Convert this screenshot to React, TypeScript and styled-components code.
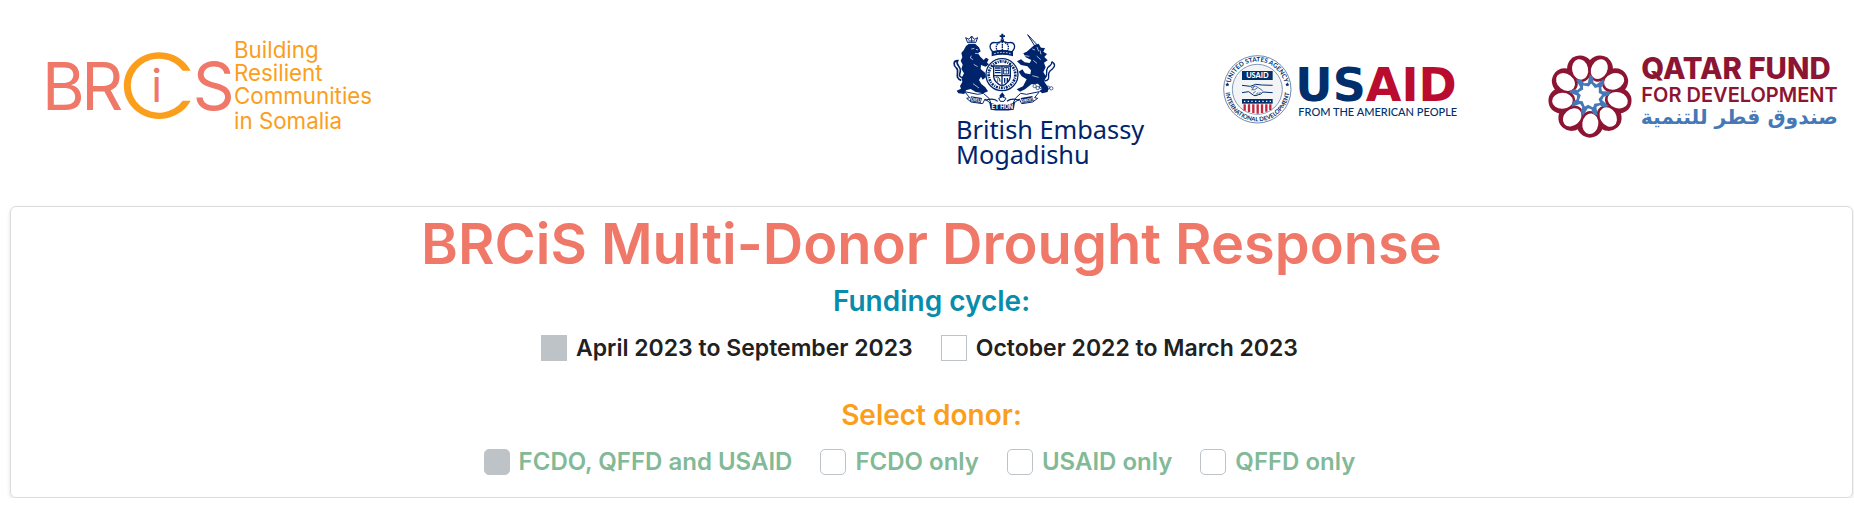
import React, { useState } from "react";
import styled, { createGlobalStyle } from "styled-components";

const GlobalStyle = createGlobalStyle`
  *, *::before, *::after { box-sizing: border-box; }
  body {
    margin: 0;
    background: #fff;
    font-family: Inter, "Liberation Sans", sans-serif;
  }
`;

const CORAL = "#ef7869";
const ORANGE = "#fb9e1c";
const NAVY = "#00246b";
const MAROON = "#8c1533";
const BLUE = "#4478b6";

const Header = styled.header`
  display: flex;
  align-items: center;
  justify-content: space-between;
  padding: 28px 14px 34px 42px;
`;

const Partners = styled.div`
  display: flex;
  align-items: center;
  gap: 68px;
`;

const Logo = styled.svg`
  display: block;
  flex: none;
  height: 144px;
`;

const Panel = styled.main`
  display: flex;
  flex-direction: column;
  align-items: center;
  margin: 0 1px 0 10px;
  padding: 7px 16px 22px;
  border: 1px solid #dadcdc;
  border-radius: 6px;
  box-shadow: 0 2px 4px rgba(0, 0, 0, 0.12);
`;

const Title = styled.h1`
  margin: 0 0 5px;
  color: ${CORAL};
  font-size: 56px;
  font-weight: 600;
  line-height: 60px;
  text-align: center;
`;

const Group = styled.fieldset`
  display: flex;
  flex-direction: column;
  align-items: center;
  margin: 0;
  padding: 0;
  border: 0;

  & + & {
    margin-top: 32px;
  }
`;

const GroupTitle = styled.legend<{ $color: string }>`
  padding: 0;
  margin: 0 auto 12px;
  color: ${(p) => p.$color};
  font-size: 28px;
  font-weight: 600;
  line-height: 44px;
`;

const Options = styled.div`
  display: flex;
  flex-wrap: wrap;
  justify-content: center;
  gap: 8px 28px;
  padding-right: 24px;
`;

const Option = styled.label<{ $color: string; $size: number }>`
  display: flex;
  align-items: center;
  gap: 9px;
  color: ${(p) => p.$color};
  font-size: ${(p) => p.$size}px;
  font-weight: 600;
  line-height: 26px;
  cursor: pointer;
`;

const Box = styled.input<{ $radius: number }>`
  appearance: none;
  flex: none;
  width: 26px;
  height: 26px;
  margin: 0;
  border: 1px solid #bdc3c7;
  border-radius: ${(p) => p.$radius}px;
  background: #fff;
  cursor: pointer;

  &:checked {
    background: #bdc3c7;
  }
`;

function BrcisLogo() {
  return (
    <Logo width="332" viewBox="36 -6 996 432" role="img" aria-label="BRCiS">
      <g fill={CORAL} fontFamily="Inter, sans-serif" fontSize="196" fontWeight="400">
        <text x="36" y="239">B</text>
        <text x="154" y="239">R</text>
        <text x="488" y="239">S</text>
        <text x="364" y="216" fontSize="134">i</text>
      </g>
      <path
        d="M482 122H458A85 81 0 1 0 458 212H482A106 100 0 1 1 482 122Z"
        fill={ORANGE}
      />
      <g fill={ORANGE} fontFamily="Inter, sans-serif" fontSize="67">
        <text x="612" y="84">Building</text>
        <text x="612" y="153">Resilient</text>
        <text x="612" y="222">Communities</text>
        <text x="612" y="296">in Somalia</text>
      </g>
    </Logo>
  );
}

function EmbassyLogo() {
  return (
    <Logo width="204" viewBox="30 9 612 432" role="img" aria-label="British Embassy Mogadishu">
      <g transform="translate(25 15)" fill={NAVY} stroke="none">
        {/* royal crown */}
        <path d="M159 11h6v5h5v5h-5v6h-6v-6h-5v-5h5zM157 28h10v6h-10z" />
        <g fill="#fff" stroke={NAVY} strokeWidth="4">
          <path d="M134 66C118 50 126 35 142 38C151 40 156 35 162 34C168 35 173 40 182 38C198 35 206 50 190 66Z" />
          <path d="M149 65C139 52 145 41 153 39M175 65C185 52 179 41 171 39M162 35V64" strokeDasharray="5 2" />
          <path d="M132 66Q162 57 192 66V76Q162 68 132 76Z" fill={NAVY} />
        </g>
        <path d="M138 71Q162 63 187 71" fill="none" stroke="#fff" strokeWidth="3" strokeDasharray="4 5" />
        {/* lion */}
        <path d="M53 48L61 42H81L92 52L97 64L89 70L96 80L106 90L113 83L121 88L116 98L122 103L112 110L98 105L97 117L110 128L113 141L103 149L98 140L92 150L99 162L111 172L119 184L105 190L82 186L67 177L53 181L48 192L30 190L25 182L38 176L35 168L42 156L40 144L47 130L39 117L43 104L37 92L42 82L39 69L46 61Z" />
        <path d="M58 38L52 23L62 28L70 18L78 28L88 23L82 38Z" fill="#fff" stroke={NAVY} strokeWidth="3" />
        <path d="M70 19v18M60 33h20" stroke={NAVY} strokeWidth="3" />
        <path d="M39 151C15 144 36 123 24 114C15 106 14 92 28 92C20 105 37 107 36 122C36 132 27 140 43 143" fill="none" stroke={NAVY} strokeWidth="5" />
        <path d="M69 57l9-2M83 58l6 2M80 70l9 1M69 77l-3 7 8 5M76 103l12 7M74 161l18 13" fill="none" stroke="#fff" strokeWidth="2" />
        {/* unicorn */}
        <path d="M238 14L265 43L260 49Z" fill="#fff" stroke={NAVY} strokeWidth="3" />
        <path d="M258 45L271 41L278 53L290 54L285 65L296 72L288 81L298 91L287 98L292 112L285 126L294 141L287 154L301 174L298 186L282 190L273 183L282 176L269 161L249 163L230 178L215 185L205 178L224 169L235 148L220 139L211 125L222 118L230 130L246 133L248 121L237 109L218 105L206 94L218 88L229 97L244 99L249 90L232 82L225 70L235 65L247 55Z" />
        <path d="M252 57l8 3M266 51l5 13M275 61l3 12M265 78l12 11M255 91l11 9M252 137l19 5M229 77l14 2" fill="none" stroke="#fff" strokeWidth="2" />
        <path d="M288 153C312 150 293 134 305 123C320 112 324 103 310 95M289 142C302 138 289 126 298 113C306 104 312 107 310 95" fill="none" stroke={NAVY} strokeWidth="4" />
        <g fill="none" stroke={NAVY} strokeWidth="2">
          <circle cx="259" cy="168" r="5" />
          <circle cx="268" cy="174" r="5" />
          <circle cx="278" cy="171" r="5" />
          <circle cx="290" cy="177" r="5" />
          <circle cx="299" cy="173" r="5" />
          <circle cx="309" cy="175" r="5" />
        </g>
        {/* garter and quartered shield */}
        <circle cx="161" cy="134" r="48" fill="#fff" stroke={NAVY} strokeWidth="4" />
        <circle cx="161" cy="134" r="40" fill="none" stroke={NAVY} strokeWidth="8" strokeDasharray="6 3 3 3" />
        <path d="M136 108H186V140Q184 158 161 168Q138 158 136 140Z" fill="#fff" stroke={NAVY} strokeWidth="4" />
        <path d="M161 108V167M136 137H186M140 114h17M140 121h17M140 128h17M169 144v14M177 144v12" stroke={NAVY} strokeWidth="4" fill="none" />
        <path d="M166 113h15v19h-15zM142 142q12-5 13 13" fill="none" stroke={NAVY} strokeWidth="3" />
        <path d="M174 114v17M167 122h14M148 145v12" stroke={NAVY} strokeWidth="2" />
        {/* motto ribbon */}
        <path d="M49 185L88 193L105 190L122 205L128 221L110 207L103 221L68 216L55 205L64 203Z" fill="#fff" stroke={NAVY} strokeWidth="3" />
        <path d="M273 185L234 193L217 190L201 205L194 221L213 207L220 221L253 216L268 205L259 203Z" fill="#fff" stroke={NAVY} strokeWidth="3" />
        <path d="M68 199L101 204L97 219L65 213ZM217 204L252 198L256 213L222 219Z" />
        <path d="M123 218Q162 229 200 218L196 239Q162 244 127 239Z" />
        <path d="M162 187L169 197L164 207H158L153 197Z" />
        <path d="M151 205Q162 196 173 205L167 214H156Z" fill="#fff" stroke={NAVY} strokeWidth="3" />
        <path d="M111 211Q137 202 148 214M213 211Q189 202 176 214" fill="none" stroke={NAVY} strokeWidth="4" />
        <g fill="#fff" fontFamily="Inter, sans-serif" fontWeight="700" textAnchor="middle">
          <text x="162" y="237" fontSize="17">ET HON</text>
          <text x="82" y="214" fontSize="13" transform="rotate(8 82 214)">DIEU</text>
          <text x="238" y="214" fontSize="12" transform="rotate(-10 238 214)">DROIT</text>
        </g>
      </g>
      <g fill={NAVY} fontFamily='"Noto Sans", sans-serif' fontSize="76">
        <text x="48" y="341">British Embassy</text>
        <text x="48" y="416">Mogadishu</text>
      </g>
    </Logo>
  );
}

function UsaidLogo() {
  const navy = "#002f6c";
  const red = "#ba0c2f";
  return (
    <Logo width="256" viewBox="36 -51 768 432" role="img" aria-label="USAID, from the American people">
      <defs>
        <path id="seal-top" d="M59 133A83 83 0 0 1 225 133" />
        <path id="seal-bottom" d="M46 133A96 96 0 0 0 238 133" />
      </defs>
      <circle cx="142" cy="133" r="101" fill="#fff" stroke="#7188ae" strokeWidth="3" />
      <circle cx="142" cy="133" r="75" fill="#f3f4f6" stroke="#8698b8" strokeWidth="3" />
      <g fill={navy} fontFamily="Lato, sans-serif" fontSize="19" fontWeight="700" textAnchor="middle">
        <text><textPath href="#seal-top" startOffset="50%">UNITED STATES AGENCY</textPath></text>
        <text fontSize="18"><textPath href="#seal-bottom" startOffset="50%">INTERNATIONAL DEVELOPMENT</textPath></text>
      </g>
      <path d="M52 112l2 4 4 1-3 3 1 4-4-2-4 2 1-4-3-3 4-1zM232 112l2 4 4 1-3 3 1 4-4-2-4 2 1-4-3-3 4-1z" fill={navy} />
      <rect x="96" y="78" width="92" height="27" fill={navy} />
      <text x="142" y="99" fill="#fff" fontFamily="Lato, sans-serif" fontSize="22" fontWeight="900" textAnchor="middle">USAID</text>
      <g fill="none" stroke={navy} strokeWidth="3" strokeLinejoin="round">
        <path d="M96 121L121 124L137 118L157 120L188 121M96 143L116 140L131 151Q139 154 145 149Q153 150 158 141L188 143" />
        <path d="M123 128L136 123L145 128L158 137M133 126L125 134Q132 137 142 129M129 145l8-6M137 149l8-7M145 148l7-7" strokeWidth="2" />
      </g>
      <path d="M96 162H188V176H96Z" fill={navy} />
      <path d="M102 169h82" stroke="#fff" strokeWidth="4" strokeDasharray="4 7" />
      <path d="M99 178H186V190Q180 203 142 207Q105 203 99 190Z" fill="#fff" />
      <path d="M104 178v19M117 178v23M130 178v26M143 178v28M156 178v26M169 178v22M181 178v18" stroke="#c2273f" strokeWidth="7" />
      <g fontFamily='"DejaVu Sans", sans-serif' fontWeight="700" fontSize="138">
        <text x="256" y="168" fill={navy}>US<tspan fill={red}>AID</tspan></text>
      </g>
      <text x="265" y="214" fill={navy} fontFamily="Lato, sans-serif" fontWeight="500" fontSize="33">FROM THE AMERICAN PEOPLE</text>
    </Logo>
  );
}

function QatarFundLogo() {
  const petals = Array.from({ length: 9 }, (_, i) => 90 + i * 40);
  return (
    <Logo width="294" viewBox="18 -36 882 432" role="img" aria-label="Qatar Fund for Development">
      <g transform="translate(150 167)">
        {petals.map((a) => (
          <ellipse key={a} cx="87" cy="0" rx="39" ry="39" fill={MAROON} transform={`rotate(${a})`} />
        ))}
        <circle r="54" fill="#fff" />
        {petals.map((a) => (
          <g key={a} transform={`rotate(${a})`}>
            <ellipse cx="82" cy="0" rx="36" ry="29" fill={MAROON} />
            <ellipse cx="84" cy="-1" rx="31" ry="24" fill="#fff" transform="rotate(8 84 0)" />
          </g>
        ))}
        {petals.map((a) => (
          <path key={a} d="M32 -19L60 -23L54 -9L41 -4L35 18L27 6L35 -8Z" transform={`rotate(${a})`} fill={BLUE} />
        ))}
      </g>
      <g fill={MAROON} fontFamily="Inter, sans-serif">
        <text x="304" y="118" fontSize="88" fontWeight="800">QATAR FUND</text>
        <text x="304" y="186" fontSize="60" fontWeight="600">FOR DEVELOPMENT</text>
      </g>
      <text x="598" y="253" fill={BLUE} fontFamily='"DejaVu Sans", sans-serif' fontSize="61" fontWeight="700" textAnchor="middle" direction="rtl">
        صندوق قطر للتنمية
      </text>
    </Logo>
  );
}

type OptionGroupProps = {
  name: string;
  title: string;
  titleColor: string;
  labelColor: string;
  labelSize: number;
  radius: number;
  options: string[];
};

function OptionGroup({ name, title, titleColor, labelColor, labelSize, radius, options }: OptionGroupProps) {
  const [selected, setSelected] = useState(options[0]);
  return (
    <Group>
      <GroupTitle $color={titleColor}>{title}</GroupTitle>
      <Options>
        {options.map((option) => (
          <Option key={option} $color={labelColor} $size={labelSize}>
            <Box
              type="radio"
              name={name}
              value={option}
              $radius={radius}
              checked={selected === option}
              onChange={() => setSelected(option)}
            />
            {option}
          </Option>
        ))}
      </Options>
    </Group>
  );
}

export default function App() {
  return (
    <>
      <GlobalStyle />
      <Header>
        <BrcisLogo />
        <Partners>
          <EmbassyLogo />
          <UsaidLogo />
          <QatarFundLogo />
        </Partners>
      </Header>
      <Panel>
        <Title>BRCiS Multi-Donor Drought Response</Title>
        <OptionGroup
          name="cycle"
          title="Funding cycle:"
          titleColor="#078cab"
          labelColor="#212121"
          labelSize={23}
          radius={0}
          options={["April 2023 to September 2023", "October 2022 to March 2023"]}
        />
        <OptionGroup
          name="donor"
          title="Select donor:"
          titleColor={ORANGE}
          labelColor="#82b996"
          labelSize={24}
          radius={5}
          options={["FCDO, QFFD and USAID", "FCDO only", "USAID only", "QFFD only"]}
        />
      </Panel>
    </>
  );
}
